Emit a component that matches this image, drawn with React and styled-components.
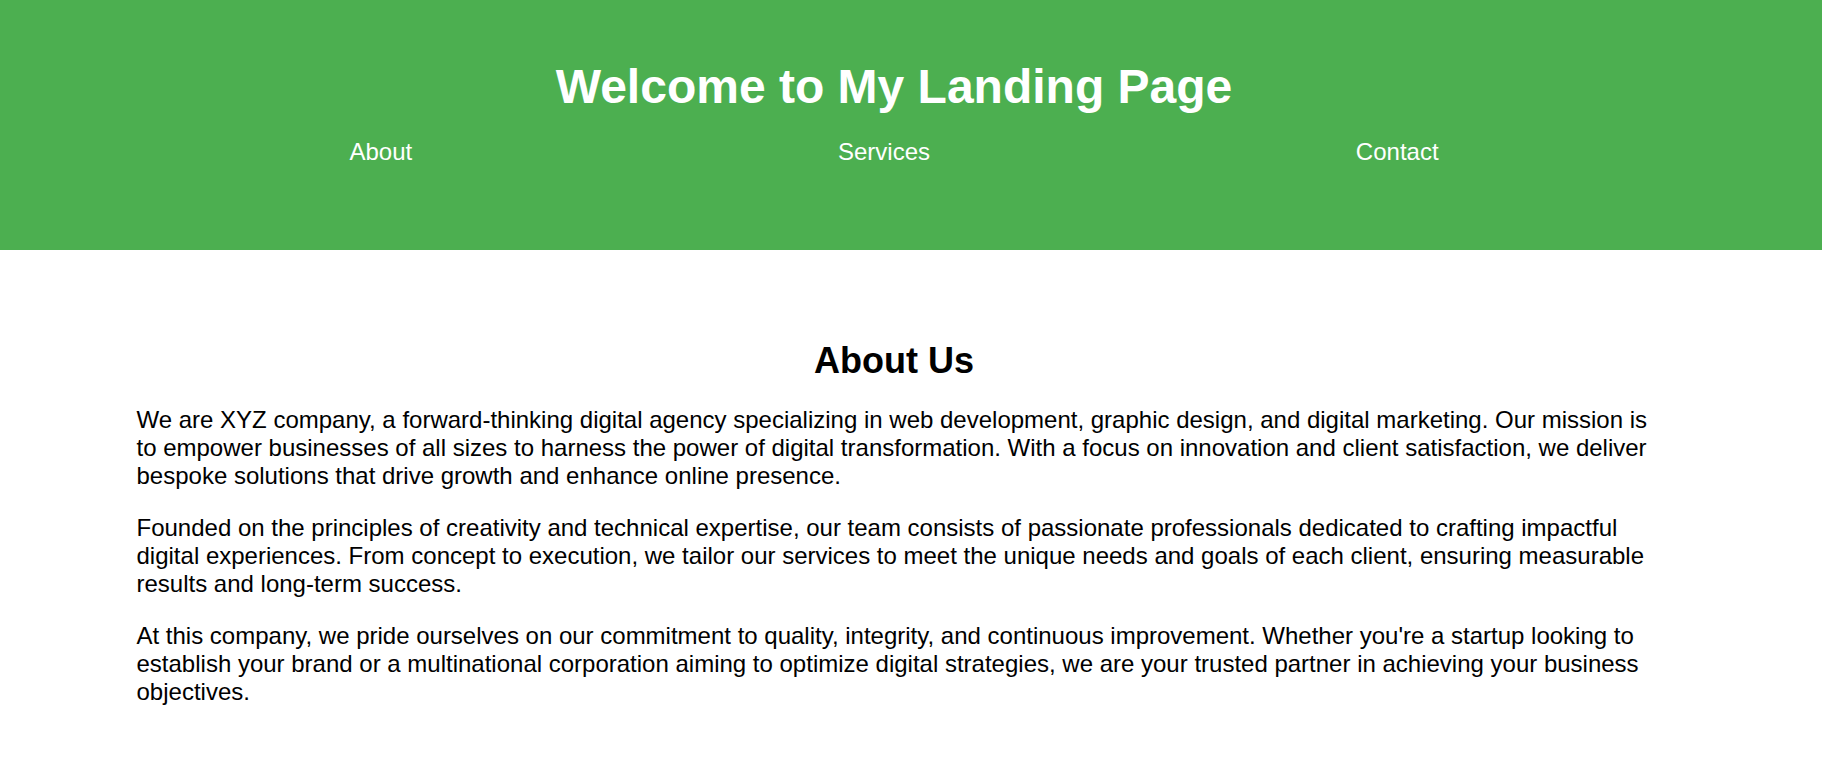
import styled, { createGlobalStyle } from 'styled-components'

const GlobalStyle = createGlobalStyle`
	html, body {
		margin: 0;
		padding: 0;
		background: #fff;
	}
	body {
		font-family: "Liberation Sans", Arial, sans-serif;
		font-size: 24px;
		color: #000;
	}
`

const links = ['About', 'Services', 'Contact']

const paragraphs = [
	"We are XYZ company, a forward-thinking digital agency specializing in web development, graphic design, and digital marketing. Our mission is to empower businesses of all sizes to harness the power of digital transformation. With a focus on innovation and client satisfaction, we deliver bespoke solutions that drive growth and enhance online presence.",
	"Founded on the principles of creativity and technical expertise, our team consists of passionate professionals dedicated to crafting impactful digital experiences. From concept to execution, we tailor our services to meet the unique needs and goals of each client, ensuring measurable results and long-term success.",
	"At this company, we pride ourselves on our commitment to quality, integrity, and continuous improvement. Whether you're a startup looking to establish your brand or a multinational corporation aiming to optimize digital strategies, we are your trusted partner in achieving your business objectives.",
]

const App = () => {
	return (
		<>
			<GlobalStyle />
			<Header>
				<Frame>
					<Title>Welcome to My Landing Page</Title>
					<Container>
						<NavList>
							{links.map(link => (
								<li key={link}>
									<NavLink href={`#${link.toLowerCase()}`}>{link}</NavLink>
								</li>
							))}
						</NavList>
					</Container>
				</Frame>
			</Header>
			<Section id="about">
				<Frame>
					<Container>
						<Heading>About Us</Heading>
						{paragraphs.map((text, i) => (
							<Text key={i}>{text}</Text>
						))}
					</Container>
				</Frame>
			</Section>
		</>
	)
}

const Header = styled.header`
	background: #4caf50;
	color: #fff;
	padding: 36px 0 84px;
`

const Frame = styled.div`
	width: 1788px;
	text-align: center;
`

const Container = styled.div`
	max-width: 1515px;
	margin: 0 auto;
`

const Title = styled.h1`
	font-size: 48px;
	font-weight: bold;
	line-height: normal;
	margin: 23px 0 24px;
`

const NavList = styled.ul`
	display: flex;
	justify-content: space-around;
	list-style: none;
	margin: 0;
	padding: 0;
`

const NavLink = styled.a`
	color: #fff;
	text-decoration: none;
	font-size: 24px;
	line-height: normal;
`

const Section = styled.section`
	padding: 60px 0;
`

const Heading = styled.h2`
	font-size: 36px;
	font-weight: bold;
	line-height: normal;
	margin: 30px 0 24px;
`

const Text = styled.p`
	text-align: left;
	font-size: 24px;
	line-height: normal;
	margin: 24px 0;
`

export default App
